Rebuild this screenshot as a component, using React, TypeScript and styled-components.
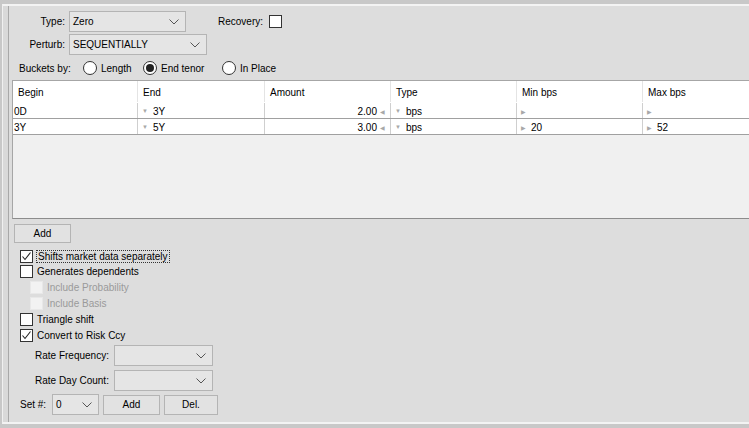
import React from "react";
import styled, { createGlobalStyle } from "styled-components";

const Global = createGlobalStyle`
  html, body { margin: 0; padding: 0; background: #c8c8c8; }
  body { font-family: Tahoma, "Liberation Sans", Arial, sans-serif; font-size: 10px; color: #000; }
  * { box-sizing: border-box; }
`;

const Frame = styled.div`
  width: 749px;
  height: 428px;
  padding: 4px 0 4px 2px;
  background: #c8c8c8;
  overflow: hidden;
  display: flex;
`;

const Outer = styled.div`
  flex: 1;
  display: flex;
  border-top: 2px solid #f3f3f3;
  border-bottom: 2px solid #f3f3f3;
  border-left: 1px solid #f0f0f0;
  background: #d9d9d9;
  padding-left: 5px;
`;

const Panel = styled.div`
  flex: 1;
  min-width: 0;
  background: #dddddd;
  border-left: 1px solid #a8a8a8;
  padding: 4px 0 0 0;
  display: flex;
  flex-direction: column;
  overflow: hidden;
`;

const TopRow = styled.div<{ $mt: number }>`
  display: flex;
  align-items: center;
  height: 21px;
  gap: 4px;
  margin-top: ${(p) => p.$mt}px;
  padding-left: 10px;
`;

const Label = styled.span<{ $align?: string; $w?: number }>`
  text-align: ${(p) => p.$align || "right"};
  white-space: nowrap;
  flex-shrink: 0;
  ${(p) => (p.$w ? `width: ${p.$w}px; display: inline-block;` : "")}
`;

const SelectBox = styled.div<{ $w: number }>`
  width: ${(p) => p.$w}px;
  height: 21px;
  border: 1px solid #b4b4b4;
  background: #e5e5e5;
  display: flex;
  align-items: center;
  padding-left: 3px;
  justify-content: space-between;
  flex-shrink: 0;
`;

const Chevron = styled.svg`
  width: 10px;
  height: 6px;
  margin-right: 6px;
  flex-shrink: 0;
`;

const Recovery = styled.div`
  display: flex;
  align-items: center;
  gap: 6px;
  margin-left: 28px;
`;

const Box = styled.span<{ $disabled?: boolean }>`
  width: 13px;
  height: 13px;
  flex-shrink: 0;
  border: 1px solid ${(p) => (p.$disabled ? "#e8e8e8" : "#333")};
  background: ${(p) => (p.$disabled ? "#f2f2f2" : "#fff")};
  display: inline-flex;
  align-items: center;
  justify-content: center;
`;

const BucketsRow = styled.div`
  display: flex;
  align-items: center;
  height: 14px;
  margin: 6px 0 0 10px;
`;

const RadioItem = styled.label<{ $w: number }>`
  display: flex;
  align-items: center;
  gap: 4px;
  width: ${(p) => p.$w}px;
  flex-shrink: 0;
`;

const RadioCircle = styled.span<{ $on?: boolean }>`
  width: 14px;
  height: 14px;
  border-radius: 50%;
  border: 1px solid #333;
  background: #fff;
  display: inline-flex;
  align-items: center;
  justify-content: center;
  &::after {
    content: "";
    width: 8px;
    height: 8px;
    border-radius: 50%;
    background: ${(p) => (p.$on ? "#222" : "transparent")};
  }
`;

const Table = styled.div`
  margin: 5px 0 0 3px;
  height: 139px;
  border-top: 1px solid #a6a6a6;
  border-left: 1px solid #a6a6a6;
  border-bottom: 1px solid #8c8c8c;
  background: #f0f0f0;
  overflow: hidden;
`;

const Row = styled.div<{ $header?: boolean }>`
  display: grid;
  grid-template-columns: 125px 127px 126px 126px 126px 126px;
  height: ${(p) => (p.$header ? 22 : 16)}px;
  background: #fff;
  border-bottom: 1px solid ${(p) => (p.$header ? "#fff" : "#a0a0a0")};
`;

const Cell = styled.div<{ $header?: boolean; $right?: boolean }>`
  display: flex;
  align-items: center;
  padding-left: ${(p) => (p.$header ? 5 : 1)}px;
  padding-right: 0;
  border-right: 1px solid ${(p) => (p.$header ? "#e4e4e4" : "#cfcfcf")};
  white-space: nowrap;
  justify-content: ${(p) => (p.$right ? "flex-end" : "flex-start")};
  ${(p) => (p.$header ? "padding-top: 2px;" : "padding-top: 1px;")}
`;

const Tri = styled.span`
  color: #a8a8a8;
  font-size: 6px;
  margin: 0 5px 0 3px;
`;

const Button = styled.button<{ $w: number; $h?: number }>`
  width: ${(p) => p.$w}px;
  height: ${(p) => p.$h || 19}px;
  border: 1px solid #b4b4b4;
  background: #e2e2e2;
  font: inherit;
  color: #000;
  padding: 0;
  flex-shrink: 0;
`;

const AddRow = styled.div`
  padding: 5px 0 0 5px;
`;

const Checks = styled.div`
  display: flex;
  flex-direction: column;
  padding: 6px 0 0 11px;
`;

const CheckRow = styled.div<{ $indent?: boolean; $h: number; $disabled?: boolean }>`
  display: flex;
  align-items: center;
  gap: 4px;
  height: ${(p) => p.$h}px;
  padding-left: ${(p) => (p.$indent ? 10 : 0)}px;
  color: ${(p) => (p.$disabled ? "#9a9a9a" : "#000")};
`;

const Focus = styled.span`
  outline: 1px dotted #333;
  outline-offset: 0px;
  padding: 0 1px;
`;

const FieldRow = styled.div<{ $pl: number; $mt: number }>`
  display: flex;
  align-items: center;
  gap: 4px;
  padding-left: ${(p) => p.$pl}px;
  margin-top: ${(p) => p.$mt}px;
`;

const Check = () => (
  <svg width="11" height="11" viewBox="0 0 11 11">
    <polyline points="1.5,5.5 4,8.5 9.5,1.5" fill="none" stroke="#222" strokeWidth="1.1" />
  </svg>
);

const Down = () => (
  <Chevron viewBox="0 0 10 6">
    <polyline points="0.5,0.5 5,5 9.5,0.5" fill="none" stroke="#555" strokeWidth="1" />
  </Chevron>
);

const Select = ({ w, value }: { w: number; value?: string }) => (
  <SelectBox $w={w}>
    <span>{value}</span>
    <Down />
  </SelectBox>
);

const rows = [
  { b: "0D", e: "3Y", a: "2.00", t: "bps", min: "", max: "" },
  { b: "3Y", e: "5Y", a: "3.00", t: "bps", min: "20", max: "52" },
];

export default function App() {
  return (
    <>
      <Global />
      <Frame>
        <Outer>
          <Panel>
            <TopRow $mt={1}>
              <Label $w={46}>Type:</Label>
              <Select w={117} value="Zero" />
              <Recovery>
                <Label>Recovery:</Label>
                <Box />
              </Recovery>
            </TopRow>
            <TopRow $mt={2}>
              <Label $w={46}>Perturb:</Label>
              <Select w={138} value="SEQUENTIALLY" />
            </TopRow>
            <BucketsRow>
              <Label $align="left" $w={64}>
                Buckets by:
              </Label>
              <RadioItem $w={60}>
                <RadioCircle />
                Length
              </RadioItem>
              <RadioItem $w={79}>
                <RadioCircle $on />
                End tenor
              </RadioItem>
              <RadioItem $w={80}>
                <RadioCircle />
                In Place
              </RadioItem>
            </BucketsRow>
            <Table>
              <Row $header>
                {["Begin", "End", "Amount", "Type", "Min bps", "Max bps"].map((h) => (
                  <Cell $header key={h}>
                    {h}
                  </Cell>
                ))}
              </Row>
              {rows.map((r) => (
                <Row key={r.b}>
                  <Cell>{r.b}</Cell>
                  <Cell>
                    <Tri>▼</Tri>
                    {r.e}
                  </Cell>
                  <Cell $right>
                    {r.a}
                    <Tri>◀</Tri>
                  </Cell>
                  <Cell>
                    <Tri>▼</Tri>
                    {r.t}
                  </Cell>
                  <Cell>
                    <Tri>▶</Tri>
                    {r.min}
                  </Cell>
                  <Cell>
                    <Tri>▶</Tri>
                    {r.max}
                  </Cell>
                </Row>
              ))}
            </Table>
            <AddRow>
              <Button $w={57}>Add</Button>
            </AddRow>
            <Checks>
              <CheckRow $h={14}>
                <Box>
                  <Check />
                </Box>
                <Focus>Shifts market data separately</Focus>
              </CheckRow>
              <CheckRow $h={16}>
                <Box />
                Generates dependents
              </CheckRow>
              <CheckRow $h={16} $indent $disabled>
                <Box $disabled />
                Include Probability
              </CheckRow>
              <CheckRow $h={16} $indent $disabled>
                <Box $disabled />
                Include Basis
              </CheckRow>
              <CheckRow $h={16}>
                <Box />
                Triangle shift
              </CheckRow>
              <CheckRow $h={16}>
                <Box>
                  <Check />
                </Box>
                Convert to Risk Ccy
              </CheckRow>
            </Checks>
            <FieldRow $pl={26} $mt={2}>
              <Label $align="left" $w={75}>
                Rate Frequency:
              </Label>
              <Select w={99} />
            </FieldRow>
            <FieldRow $pl={26} $mt={4}>
              <Label $align="left" $w={75}>
                Rate Day Count:
              </Label>
              <Select w={99} />
            </FieldRow>
            <FieldRow $pl={11} $mt={3}>
              <Label $align="left" $w={28}>
                Set #:
              </Label>
              <Select w={47} value="0" />
              <Button $w={57} $h={20}>Add</Button>
              <Button $w={54} $h={20}>Del.</Button>
            </FieldRow>
          </Panel>
        </Outer>
      </Frame>
    </>
  );
}
